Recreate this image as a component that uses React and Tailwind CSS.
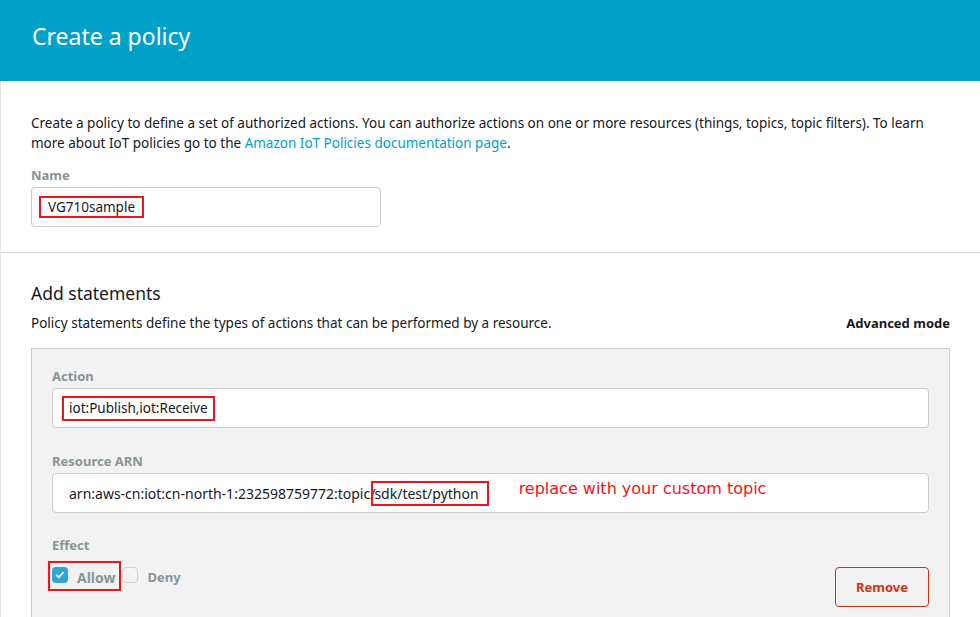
export default function App() {
  return (
    <div
      className="min-h-screen w-[980px] bg-white text-[13.5px] text-[#16191f]"
      style={{ fontFamily: '"Noto Sans", "Open Sans", sans-serif' }}
    >
      <header className="h-[81px] bg-[#00a1c9] px-8 pt-[19px]">
        <h1 className="text-[23px] leading-[34px] text-white">Create a policy</h1>
      </header>

      <div className="border-l border-[#e3e3e3]">
        <section className="px-[30px] pt-[32px] pb-[25px]">
          <p className="leading-5">
            Create a policy to define a set of authorized actions. You can authorize actions on one or more resources
            (things, topics, topic filters). To learn more about IoT policies go to the{" "}
            <a href="#" className="text-[#00a1c9]">
              Amazon IoT Policies documentation page
            </a>
            .
          </p>
          <label className="mt-3 block text-[13px] font-bold leading-5 text-[#879596]">Name</label>
          <div className="mt-[2px] flex h-10 w-[350px] items-center rounded-sm border border-[#cccccc] bg-white px-[7px]">
            <span className="flex h-[22px] items-center border-2 border-[#f0141a] px-[7px]">VG710sample</span>
          </div>
        </section>

        <section className="border-t border-[#d9d9d9] px-[30px] pt-[28px]">
          <h2 className="text-[17.5px] leading-6">Add statements</h2>
          <div className="mt-2 flex items-center justify-between leading-5">
            <p>Policy statements define the types of actions that can be performed by a resource.</p>
            <a href="#" className="text-[13px] font-bold text-[#16191f]">
              Advanced mode
            </a>
          </div>

          <div className="mt-[15px] border border-[#cccccc] bg-[#f2f2f2] px-5 pt-[17px] pb-4">
            <label className="block text-[13px] font-bold leading-5 text-[#879596]">Action</label>
            <div className="mt-[2px] flex h-10 items-center rounded-sm border border-[#cccccc] bg-white px-[9px]">
              <span className="flex h-[25px] items-center border-2 border-[#f0141a] px-[5px]">
                iot:Publish,iot:Receive
              </span>
            </div>

            <label className="mt-[23px] block text-[13px] font-bold leading-5 text-[#879596]">Resource ARN</label>
            <div className="mt-[2px] flex h-10 items-center rounded-sm border border-[#cccccc] bg-white pl-4 text-[14px]">
              <span>arn:aws-cn:iot:cn-north-1:232598759772:topic/</span>
              <span className="-ml-[4px] flex h-[25px] items-center border-2 border-[#f0141a] pr-[8px] pl-[1px]">
                sdk/test/python
              </span>
              <span
                className="ml-[30px] -mt-[8px] text-[16px] text-[#f0141a]"
                style={{ fontFamily: '"DejaVu Sans", sans-serif' }}
              >
                replace with your custom topic
              </span>
            </div>

            <label className="mt-[22px] block text-[13px] font-bold leading-5 text-[#879596]">Effect</label>
            <div className="mt-[6px] flex items-start justify-between">
              <div className="-ml-[4px] flex items-center">
                <span className="flex h-[30px] items-center border-2 border-[#f0141a] pr-[3px] pl-[2px]">
                  <span className="-mt-[2px] flex h-4 w-4 items-center justify-center rounded-sm bg-[#2ea6d3]">
                    <svg viewBox="0 0 16 16" className="h-3 w-3" fill="none">
                      <path d="M3.5 8.5l3 2.5 5.5-6" stroke="white" strokeWidth="2.4" strokeLinecap="round" strokeLinejoin="round" />
                    </svg>
                  </span>
                  <span className="ml-[9px] mt-[3px] text-[14px] font-bold text-[#879596]">Allow</span>
                </span>
                <span className="-mt-[2px] ml-[1px] h-4 w-4 rounded-sm border border-[#d0d0d0] bg-[#f4f4f4]" />
                <span className="ml-[10px] mt-[3px] text-[13px] font-bold text-[#879596]">Deny</span>
              </div>
              <button className="mt-[6px] h-10 w-[94px] rounded-sm border border-[#d13212] pt-[2px] text-[13px] font-bold text-[#d13212]">
                Remove
              </button>
            </div>
          </div>
        </section>
      </div>
    </div>
  );
}
